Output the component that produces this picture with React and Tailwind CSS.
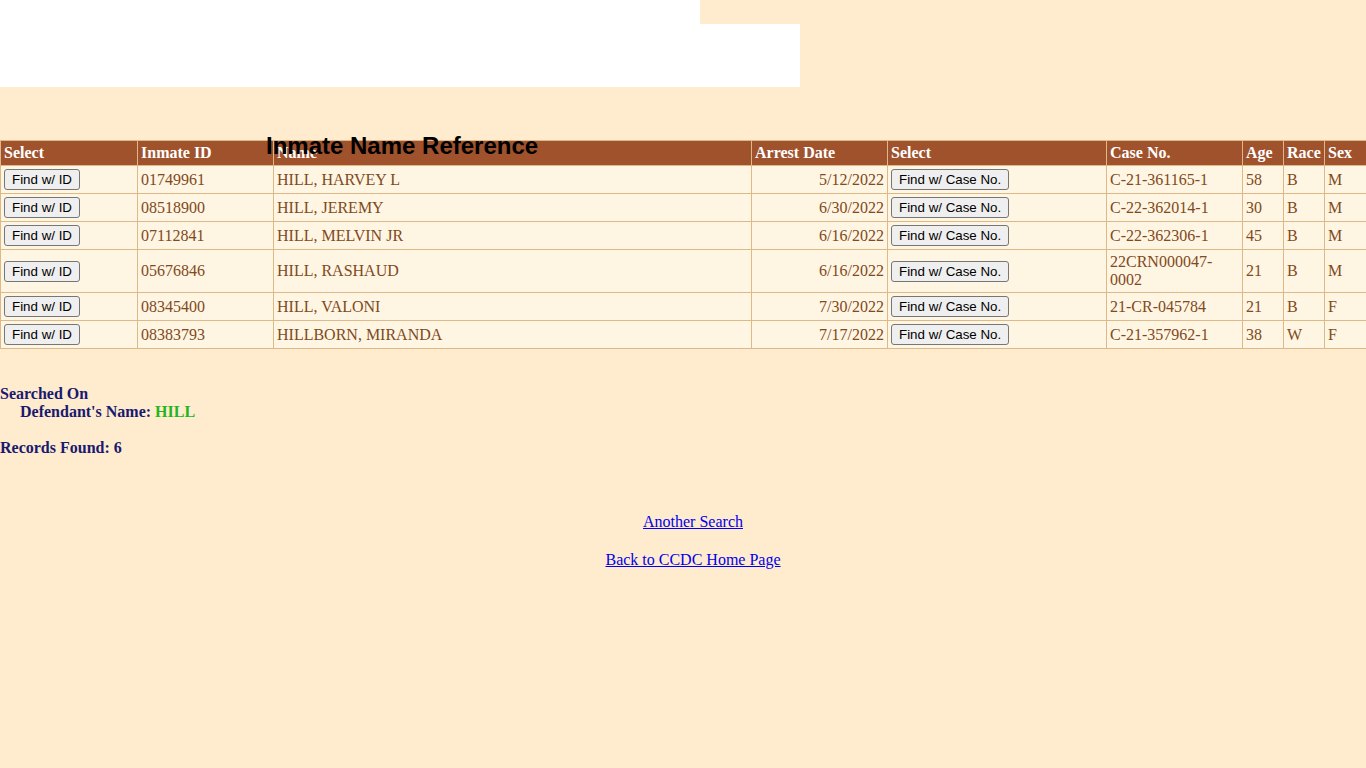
import React from "react";

const rows = [
  { id: "01749961", name: "HILL, HARVEY L", date: "5/12/2022", caseNo: "C-21-361165-1", age: "58", race: "B", sex: "M" },
  { id: "08518900", name: "HILL, JEREMY", date: "6/30/2022", caseNo: "C-22-362014-1", age: "30", race: "B", sex: "M" },
  { id: "07112841", name: "HILL, MELVIN JR", date: "6/16/2022", caseNo: "C-22-362306-1", age: "45", race: "B", sex: "M" },
  { id: "05676846", name: "HILL, RASHAUD", date: "6/16/2022", caseNo: "22CRN000047-0002", age: "21", race: "B", sex: "M" },
  { id: "08345400", name: "HILL, VALONI", date: "7/30/2022", caseNo: "21-CR-045784", age: "21", race: "B", sex: "F" },
  { id: "08383793", name: "HILLBORN, MIRANDA", date: "7/17/2022", caseNo: "C-21-357962-1", age: "38", race: "W", sex: "F" },
];

const headers = ["Select", "Inmate ID", "Name", "Arrest Date", "Select", "Case No.", "Age", "Race", "Sex"];
const widths = [137, 136, 478, 136, 219, 136, 41, 41, 42];

const Btn = ({ children }) => (
  <button className="rounded-[3px] border border-[#767676] bg-[#efefef] px-[7px] py-[1px] text-[13.33px] leading-[17px] text-black [font-family:Arial,'Liberation_Sans',sans-serif]">
    {children}
  </button>
);

const td = "border border-[#deb887] px-[3px] py-[3px] align-middle";

export default function App() {
  return (
    <div className="min-h-[768px] bg-[#ffebcd] [font-family:'Liberation_Serif','Times_New_Roman',serif] text-[16px] leading-[18px]">
      {/* banner area */}
      <div className="h-[24px] w-[700px] bg-white" />
      <div className="h-[63px] w-[800px] bg-white" />

      <div className="relative mt-[53px]">
        <h1 className="absolute left-[266px] top-[-8px] z-10 text-[24px] font-bold leading-[28px] text-black [font-family:Arial,'Liberation_Sans',sans-serif]">
          Inmate Name Reference
        </h1>
        <table className="w-[1366px] table-fixed border-collapse text-[#804a20]">
          <colgroup>
            {widths.map((w, i) => (
              <col key={i} style={{ width: w }} />
            ))}
          </colgroup>
          <thead>
            <tr className="bg-[#a0522d]">
              {headers.map((h, i) => (
                <th key={i} className="border border-[#deb887] px-[3px] py-[3px] text-left font-bold text-white">
                  {h}
                </th>
              ))}
            </tr>
          </thead>
          <tbody className="bg-[#fff5e3]">
            {rows.map((r) => (
              <tr key={r.id}>
                <td className={td}><Btn>Find w/ ID</Btn></td>
                <td className={td}>{r.id}</td>
                <td className={td}>{r.name}</td>
                <td className={td + " text-right"}>{r.date}</td>
                <td className={td}><Btn>Find w/ Case No.</Btn></td>
                <td className={td + " break-words"}>{r.caseNo}</td>
                <td className={td}>{r.age}</td>
                <td className={td}>{r.race}</td>
                <td className={td}>{r.sex}</td>
              </tr>
            ))}
          </tbody>
        </table>
      </div>

      <div className="mt-[36px] font-bold text-[#191970]">
        <div>Searched On</div>
        <div className="pl-[20px]">
          Defendant's Name: <span className="text-[#22b522]">HILL</span>
        </div>
        <div className="mt-[18px]">Records Found: 6</div>
      </div>

      <div className="mt-[56px] flex flex-col items-center gap-[20px] pl-[20px]">
        <a href="#" className="text-[#0000ee] underline">Another Search</a>
        <a href="#" className="text-[#0000ee] underline">Back to CCDC Home Page</a>
      </div>
    </div>
  );
}
